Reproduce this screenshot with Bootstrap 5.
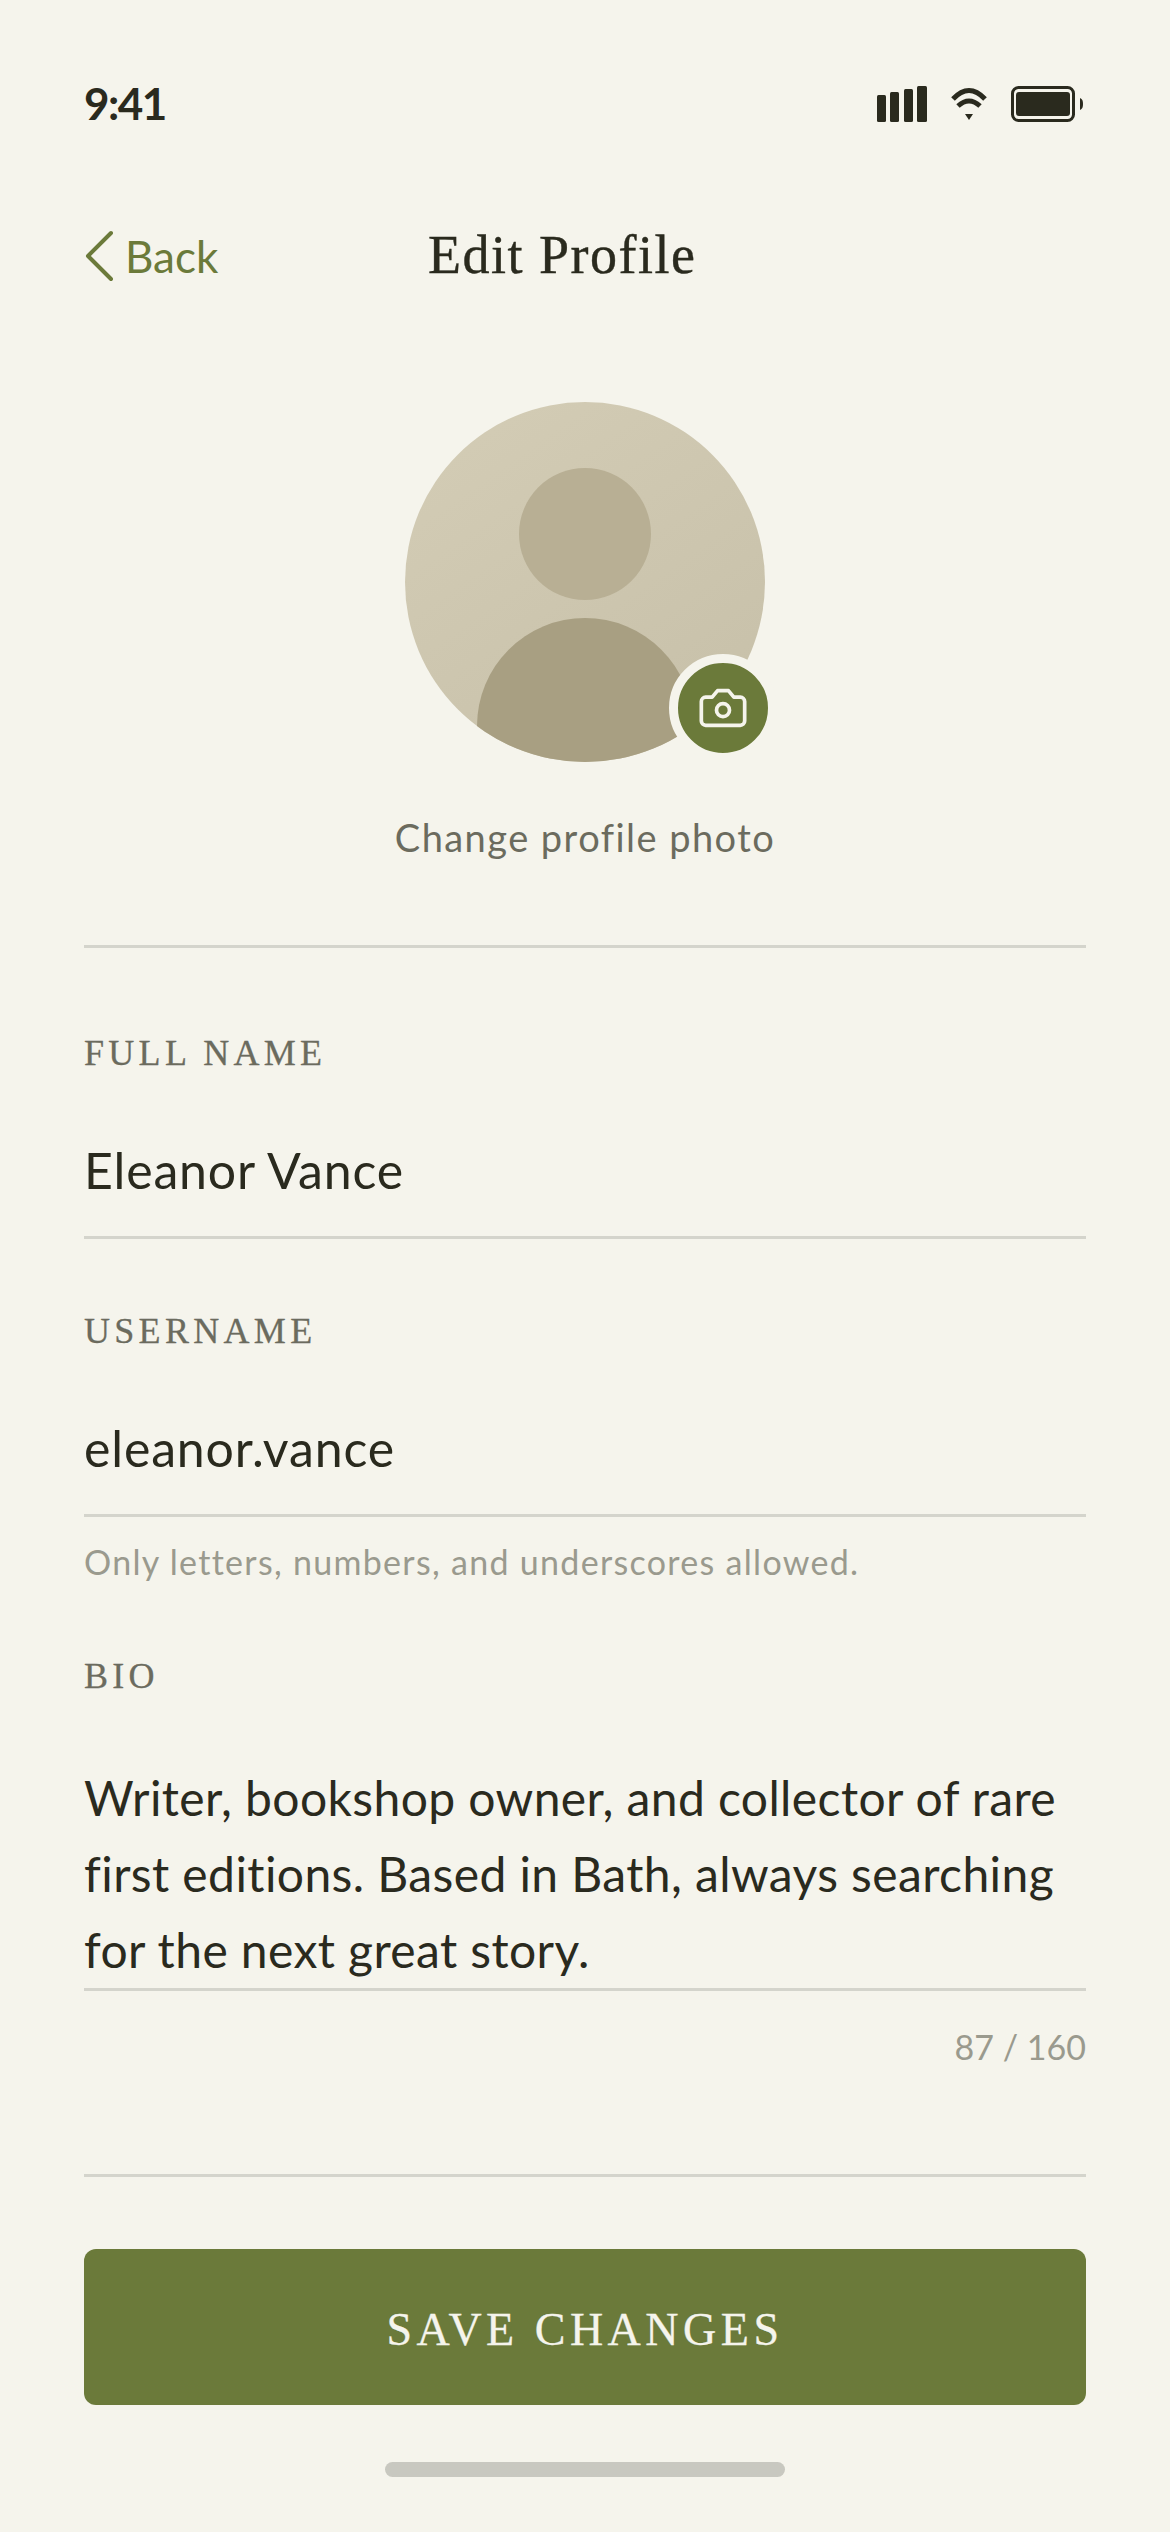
<!doctype html>
<html lang="en">
  <head>
    <meta charset="UTF-8" />
    <meta name="viewport" content="width=device-width, initial-scale=1.0" />
    <title>Edit Profile</title>
    <link
      href="https://cdn.jsdelivr.net/npm/bootstrap@5.3.0/dist/css/bootstrap.min.css"
      rel="stylesheet"
    />
    <style>
      body {
        background: #f5f4ec;
        color: #2a2a1e;
        font-family: Lato, "Open Sans", sans-serif;
      }
      .screen {
        height: 2532px;
        padding: 0 84px;
        overflow: hidden;
      }
      .status-row {
        height: 56px;
        margin-top: 76px;
      }
      .clock {
        font-size: 44px;
        font-weight: 700;
        line-height: 56px;
        letter-spacing: -1.5px;
        padding-bottom: 2px;
      }
      .head-row {
        height: 84px;
        margin-top: 82px;
      }
      .back-link {
        color: #6b7a3a;
        font-size: 44px;
        gap: 11px;
        text-decoration: none;
      }
      .head-title {
        font-family: "Liberation Serif", serif;
        font-size: 54px;
        line-height: 84px;
        margin: 0;
        padding-bottom: 2px;
        font-weight: 400;
        letter-spacing: 1.5px;
        -webkit-text-stroke: 0.4px #2a2a1e;
      }
      .head-spacer {
        width: 180px;
      }
      .avatar-wrap {
        width: 360px;
        height: 360px;
        margin: 104px auto 0;
      }
      .avatar-disc {
        width: 360px;
        height: 360px;
        background: linear-gradient(145deg, #d4cdb6, #c6bfa8);
      }
      .avatar-head {
        width: 132px;
        height: 132px;
        margin-top: 66px;
        background: #b8af94;
      }
      .avatar-body {
        width: 216px;
        height: 216px;
        margin-top: 18px;
        background: #a89f82;
      }
      .photo-btn {
        width: 108px;
        height: 108px;
        right: -12px;
        bottom: 0;
        background: #6b7a3a;
        border: 9px solid #f5f4ec;
      }
      .photo-note {
        color: #6b6b5e;
        font-size: 38px;
        letter-spacing: 1.45px;
        line-height: 52px;
        margin-top: 49px;
        margin-bottom: 82px;
      }
      .rule-line {
        height: 3px;
        background: #d4d4cc;
      }
      .field-label {
        color: #6b6b5e;
        font-family: "Liberation Serif", serif;
        font-size: 36px;
        letter-spacing: 4.3px;
        line-height: 44px;
        margin: 0 0 57px;
        -webkit-text-stroke: 0.3px #6b6b5e;
      }
      .name-block {
        margin-top: 83px;
      }
      .user-block {
        margin-top: 70px;
      }
      .field-value {
        font-size: 50px;
        letter-spacing: 0.85px;
        line-height: 76px;
        margin-bottom: 28px;
      }
      .bio-value {
        font-size: 48px;
        letter-spacing: 0.4px;
        line-height: 76px;
      }
      .field-hint {
        color: #9a9a8e;
        font-size: 34px;
        letter-spacing: 1.3px;
        line-height: 46px;
        margin-top: 22px;
      }
      .bio-block {
        margin-top: 69px;
      }
      .bio-label {
        margin-bottom: 62px;
      }
      .count-hint {
        letter-spacing: 0;
        margin-top: 33px;
        margin-bottom: 104px;
      }
      .save-btn {
        height: 156px;
        margin-top: 72px;
        padding: 10px 0 6px;
        background: #6b7a3a;
        border-radius: 12px;
        color: #f5f4ec;
        font-family: "Liberation Serif", serif;
        font-size: 46px;
        letter-spacing: 4.5px;
        -webkit-text-stroke: 0.3px #f5f4ec;
      }
      .home-bar {
        width: 400px;
        height: 15px;
        background: #c8c8c0;
        margin: 57px auto 0;
      }
    </style>
  </head>
  <body>
    <div class="screen">
      <div class="status-row d-flex justify-content-between align-items-center">
        <span class="clock">9:41</span>
        <div class="d-flex align-items-center">
          <svg width="50" height="36" viewBox="0 0 50 36" fill="#2a2a1e">
            <rect x="0" y="9" width="9" height="27" rx="1.5" />
            <rect x="13" y="6" width="9" height="30" rx="1.5" />
            <rect x="27" y="3" width="9" height="33" rx="1.5" />
            <rect x="40" y="0" width="10" height="36" rx="1.5" />
          </svg>
          <svg class="ms-4" width="36" height="32" viewBox="0 0 36 32" fill="none" stroke="#2a2a1e">
            <path d="M2 11Q18 -6 34 11" stroke-width="5" />
            <path d="M7 18Q18 8 29 18" stroke-width="5" />
            <path d="M14 26H22L18 32Z" fill="#2a2a1e" stroke="none" />
          </svg>
          <svg class="ms-4" width="75" height="36" viewBox="0 0 75 36">
            <rect x="1.5" y="1.5" width="61" height="33" rx="6" fill="none" stroke="#2a2a1e" stroke-width="3" />
            <rect x="5" y="6" width="54" height="24" rx="3" fill="#2a2a1e" />
            <path d="M69 12C71.5 13 72 15 72 18C72 21 71.5 23 69 24Z" fill="#2a2a1e" />
          </svg>
        </div>
      </div>

      <div class="head-row d-flex justify-content-between align-items-center">
        <a href="#" class="back-link d-flex align-items-center">
          <svg width="30" height="52" viewBox="0 0 30 52" fill="none" stroke="#6b7a3a" stroke-width="4" stroke-linecap="round" stroke-linejoin="round">
            <path d="M27 3L4 26L27 49" />
          </svg>
          Back
        </a>
        <h1 class="head-title">Edit Profile</h1>
        <div class="head-spacer"></div>
      </div>

      <div class="avatar-wrap position-relative">
        <div class="avatar-disc rounded-circle overflow-hidden d-flex flex-column align-items-center">
          <div class="avatar-head rounded-circle flex-shrink-0"></div>
          <div class="avatar-body rounded-circle flex-shrink-0"></div>
        </div>
        <div class="photo-btn position-absolute rounded-circle d-flex align-items-center justify-content-center">
          <svg width="52" height="52" viewBox="0 0 24 24" fill="none" stroke="#f5f4ec" stroke-width="1.7" stroke-linecap="round" stroke-linejoin="round">
            <path d="M14.5 4h-5L7 7H4a2 2 0 0 0-2 2v9a2 2 0 0 0 2 2h16a2 2 0 0 0 2-2V9a2 2 0 0 0-2-2h-3l-2.5-3z" />
            <circle cx="12" cy="13" r="3" />
          </svg>
        </div>
      </div>
      <div class="photo-note text-center">Change profile photo</div>

      <div class="rule-line"></div>

      <form>
        <div class="name-block">
          <label class="field-label d-block text-uppercase">Full Name</label>
          <div class="field-value">Eleanor Vance</div>
          <div class="rule-line"></div>
        </div>
        <div class="user-block">
          <label class="field-label d-block text-uppercase">Username</label>
          <div class="field-value">eleanor.vance</div>
          <div class="rule-line"></div>
          <div class="field-hint">Only letters, numbers, and underscores allowed.</div>
        </div>
        <div class="bio-block">
          <label class="field-label bio-label d-block text-uppercase">Bio</label>
          <div class="bio-value">Writer, bookshop owner, and collector of rare first editions. Based in Bath, always searching for the next great story.</div>
          <div class="rule-line"></div>
          <div class="field-hint count-hint text-end">87 / 160</div>
        </div>
      </form>

      <div class="rule-line"></div>
      <button type="button" class="save-btn btn w-100 text-uppercase">Save Changes</button>
      <div class="home-bar rounded-pill"></div>
    </div>

    <script src="https://cdn.jsdelivr.net/npm/bootstrap@5.3.0/dist/js/bootstrap.bundle.min.js"></script>
  </body>
</html>
